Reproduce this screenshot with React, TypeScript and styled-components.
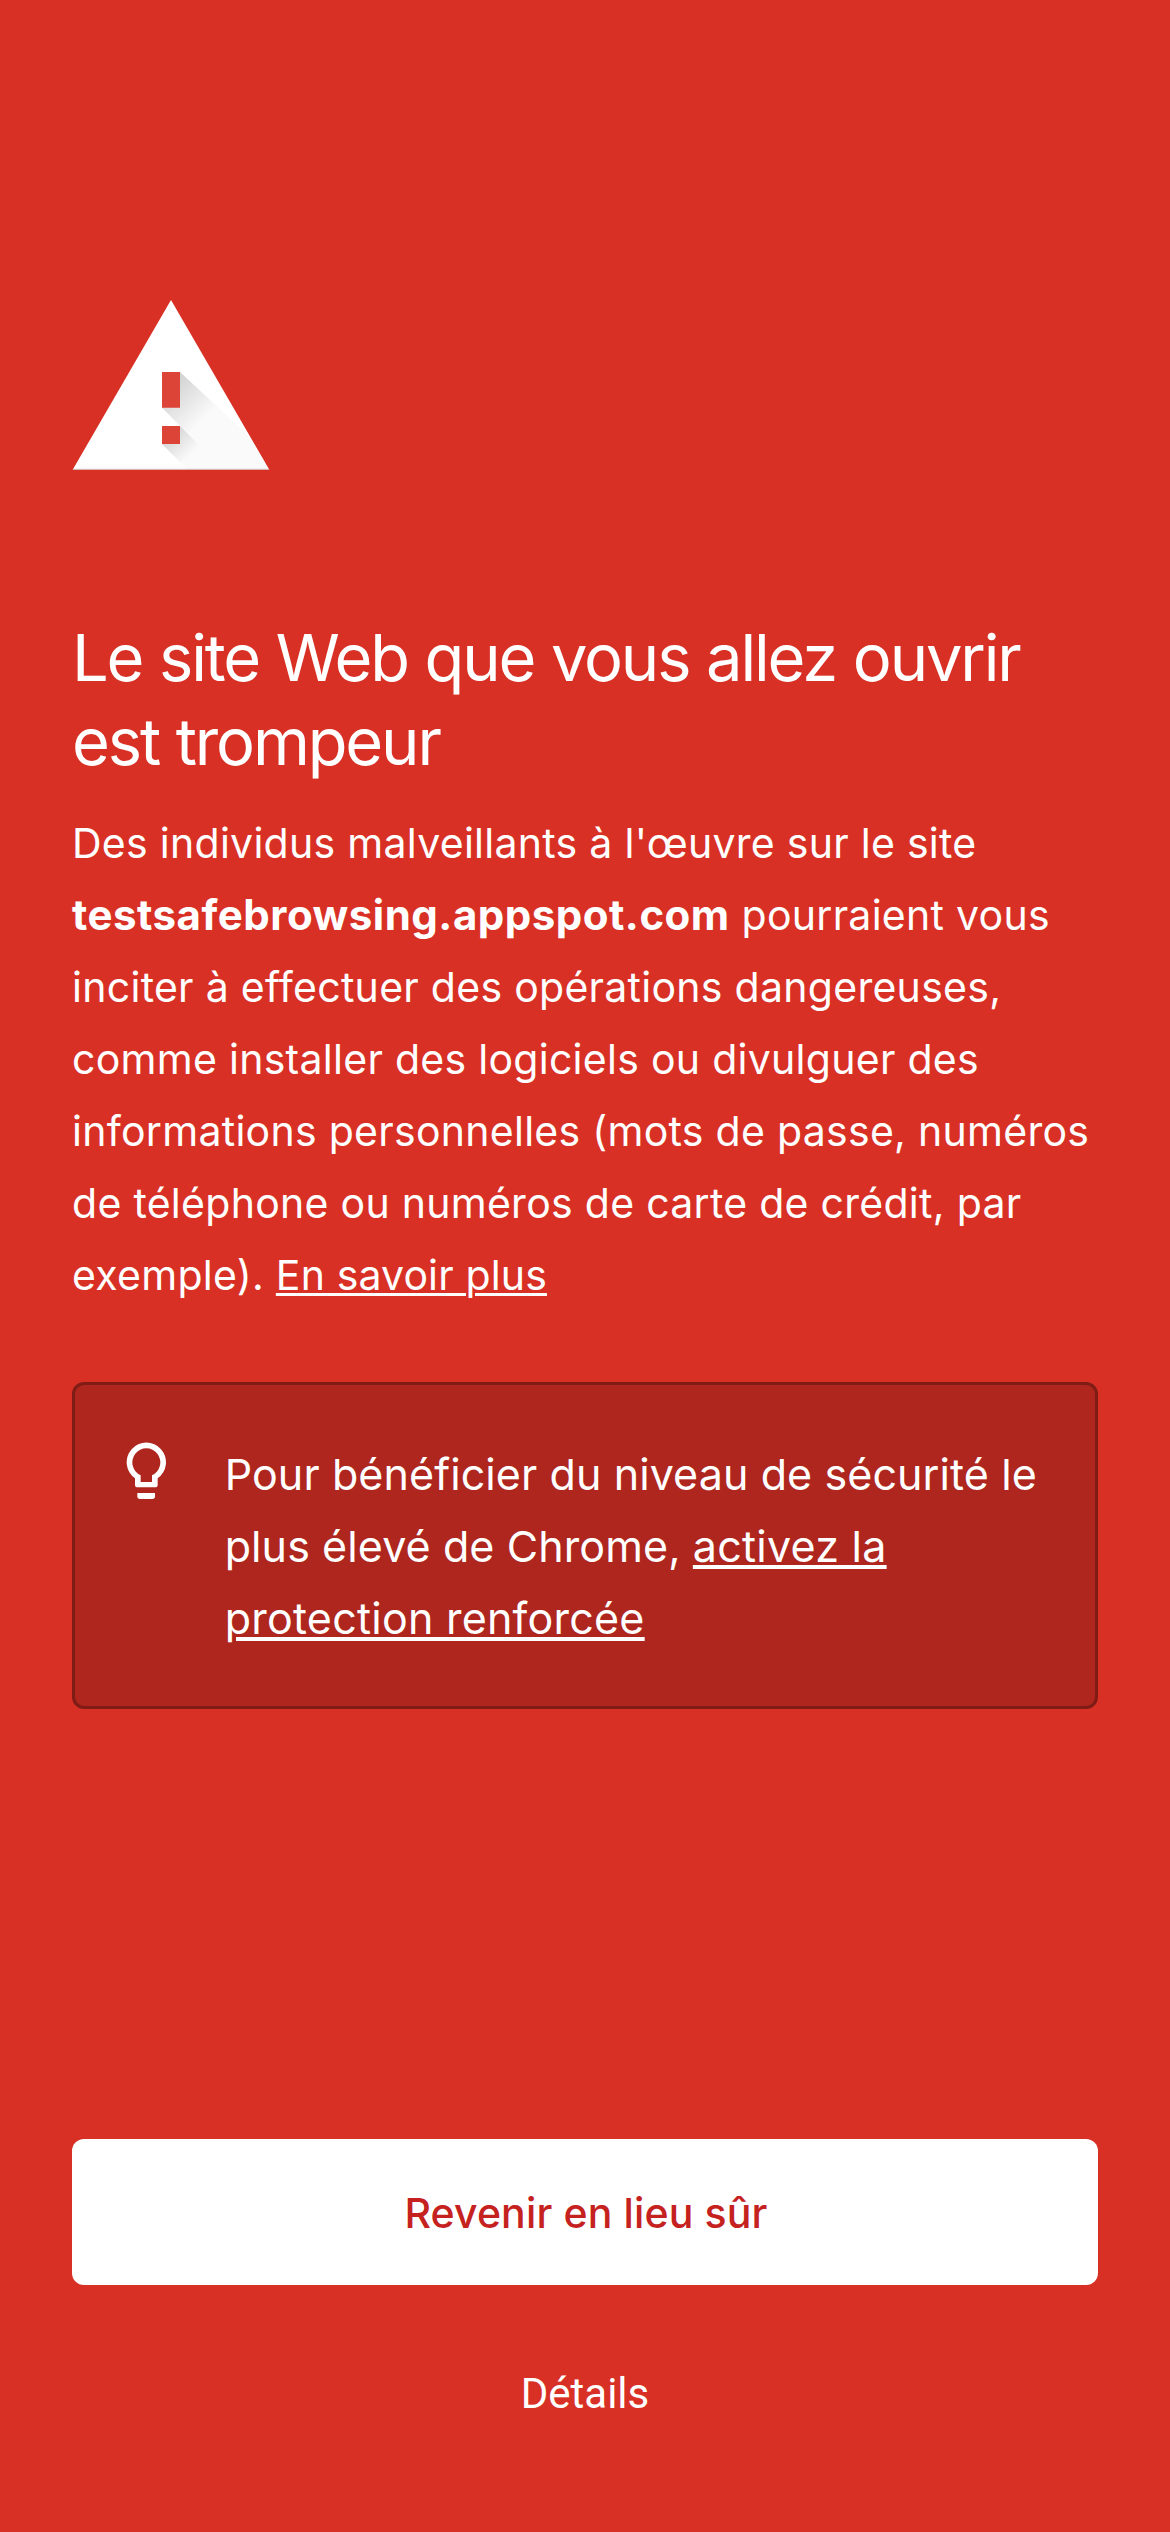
import React from "react";
import styled, { createGlobalStyle } from "styled-components";

const GlobalStyle = createGlobalStyle`
  *, *::before, *::after { box-sizing: border-box; }
  body { margin: 0; background: #d93025; }
`;

const Page = styled.div`
  display: flex;
  flex-direction: column;
  width: 1170px;
  height: 2532px;
  padding: 300px 72px 102.5px;
  background: #d93025;
  color: #fff;
  font-family: Inter, "Liberation Sans", sans-serif;
`;

const Content = styled.main`
  flex: 1;
`;

const WarningSvg = styled.svg`
  display: block;
  width: 198px;
  height: 170px;
`;

const Title = styled.h1`
  margin: 145.5px 0 0;
  font-size: 65px;
  font-weight: 400;
  line-height: 84px;
  letter-spacing: -2.15px;
  word-spacing: 0.6px;
`;

const Message = styled.p`
  margin: 23.5px 0 0;
  font-size: 41px;
  line-height: 72px;
  letter-spacing: 0.28px;
`;

const Host = styled.strong`
  font-size: 42px;
  font-weight: 700;
  line-height: 0;
  letter-spacing: 0.5px;
`;

const Link = styled.a<{ $thickness: number; $spacing: number }>`
  color: inherit;
  letter-spacing: ${(p) => p.$spacing}px;
  text-decoration: underline;
  text-decoration-thickness: ${(p) => p.$thickness}px;
  text-underline-offset: 3px;
`;

const Tip = styled.section`
  display: flex;
  align-items: flex-start;
  gap: 58px;
  height: 327px;
  margin-top: 71px;
  padding: 53px 40px 52px 51px;
  border: 3px solid #7f1c16;
  border-radius: 12px;
  background: #ae261e;
`;

const BulbSvg = styled.svg`
  flex: none;
  width: 40.67px;
  height: 58px;
  margin-top: 4px;
`;

const TipText = styled.p`
  flex: 1;
  margin: 0;
  font-size: 43px;
  line-height: 72px;
  letter-spacing: 0.1px;
`;

const Actions = styled.footer`
  display: flex;
  flex-direction: column;
  gap: 73px;
`;

const PrimaryButton = styled.button`
  height: 145.5px;
  padding: 3px 0 0 2px;
  border: 0;
  border-radius: 12px;
  background: #fff;
  color: #c5221f;
  font: 500 41px/50px Inter, "Liberation Sans", sans-serif;
  letter-spacing: 0.14px;
`;

const TextButton = styled.button`
  height: 72px;
  padding: 0;
  border: 0;
  background: none;
  color: #fff;
  font: 400 42px/72px Roboto, "Liberation Sans", sans-serif;
`;

const WarningIcon = () => (
  <WarningSvg viewBox="36 30 594 510" aria-hidden="true">
    <defs>
      <clipPath id="triangle">
        <path d="M333 30 628 539H38Z" />
      </clipPath>
      <linearGradient id="barShadow" gradientUnits="userSpaceOnUse" x1="325" y1="285" x2="430" y2="390">
        <stop offset="0" stopColor="#000" stopOpacity="0.18" />
        <stop offset="1" stopColor="#000" stopOpacity="0.02" />
      </linearGradient>
      <linearGradient id="dotShadow" gradientUnits="userSpaceOnUse" x1="325" y1="427" x2="392" y2="494">
        <stop offset="0" stopColor="#000" stopOpacity="0.18" />
        <stop offset="1" stopColor="#000" stopOpacity="0.02" />
      </linearGradient>
    </defs>
    <path d="M333 30 628 539H38Z" fill="#fff" />
    <g clipPath="url(#triangle)">
      <path d="M360 246 660 525V560H512L306 353Z" fill="url(#barShadow)" />
      <path d="M360 408 512 560H404L306 462Z" fill="url(#dotShadow)" />
      <path d="M38 536.5H628V540H38Z" fill="#000" fillOpacity="0.2" />
    </g>
    <path d="M306 246H360V353H306ZM306 408H360V462H306Z" fill="#db4437" />
  </WarningSvg>
);

const BulbIcon = () => (
  <BulbSvg viewBox="48 36 122 174" aria-hidden="true">
    <path
      fill="#fff"
      fillRule="evenodd"
      d="M75 145A59 59 0 1 1 143 145V164Q143 172 135 172H83Q75 172 75 164ZM92 156H126V135.5A42 42 0 1 0 92 135.5Z"
    />
    <path fill="#fff" d="M82 189H135V199Q135 207 127 207H90Q82 207 82 199Z" />
  </BulbSvg>
);

export default function App() {
  return (
    <>
      <GlobalStyle />
      <Page lang="fr">
        <Content>
          <WarningIcon />
          <Title>Le site Web que vous allez ouvrir est trompeur</Title>
          <Message>
            Des individus malveillants à l'œuvre sur le site <Host>testsafebrowsing.appspot.com</Host> pourraient
            vous inciter à effectuer des opérations dangereuses, comme installer des logiciels ou divulguer des
            informations personnelles (mots de passe, numéros de téléphone ou numéros de carte de crédit, par
            exemple). <Link $thickness={3} $spacing={0.14}>En savoir plus</Link>
          </Message>
          <Tip>
            <BulbIcon />
            <TipText>
              Pour bénéficier du niveau de sécurité le plus élevé de Chrome,{" "}
              <Link $thickness={4} $spacing={0.24}>activez la protection renforcée</Link>
            </TipText>
          </Tip>
        </Content>
        <Actions>
          <PrimaryButton type="button">Revenir en lieu sûr</PrimaryButton>
          <TextButton type="button">Détails</TextButton>
        </Actions>
      </Page>
    </>
  );
}
